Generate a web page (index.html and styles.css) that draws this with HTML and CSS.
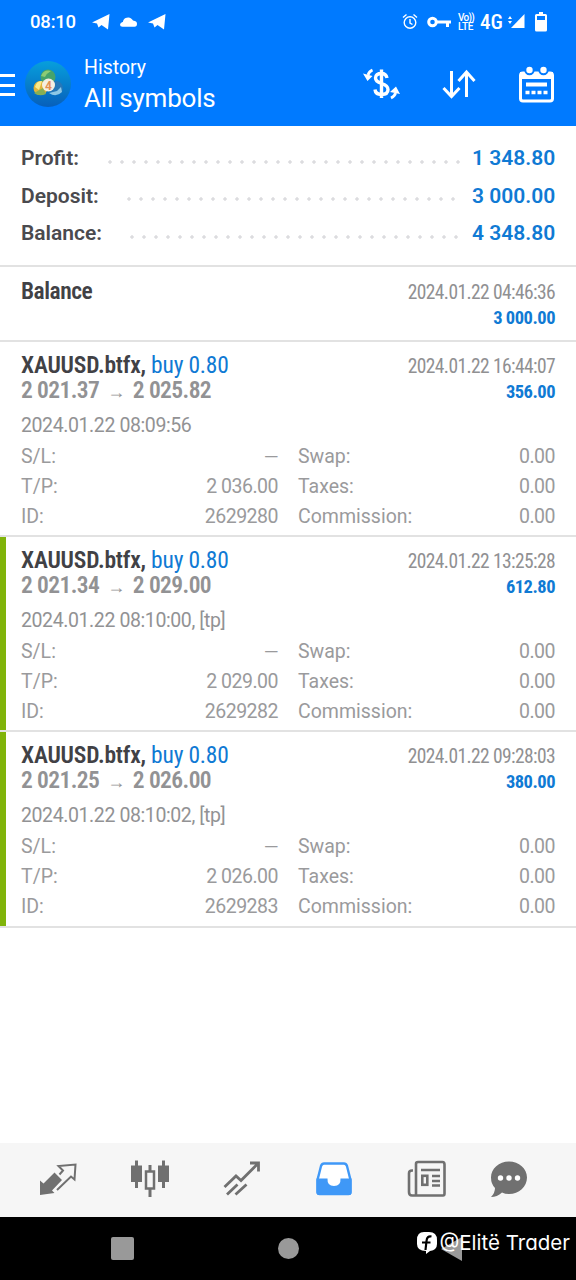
FILE: index.html
```
<!DOCTYPE html>
<html lang="en">
<head>
    <meta charset="UTF-8">
    <meta name="viewport" content="width=device-width, initial-scale=1.0">
    <title>History</title>
    <link rel="stylesheet" href="styles.css">
</head>
<body>
    <header>
        <div class="status">
            <span class="clock">08:10</span>
            <svg class="status-left" viewBox="0 0 80 24">
                <path d="M1 12.500L18.500 4L17 19.500L10.500 15L7.500 17.500L6 13.500Z"/>
                <path d="M32 13a4 4 0 0 1 .500-3a5.500 5.500 0 0 1 9.500 .500q4 .500 4 3.300q0 3-2.500 3H31.500q-2.500 0-2.500-2t3-3"/>
                <path d="M57 12.500L74.500 4L73 19.500L66.500 15L63.500 17.500L62 13.500Z"/>
            </svg>
            <div class="status-right">
                <svg class="alarm" viewBox="0 0 16 18">
                    <circle cx="8" cy="9.500" r="5.800"/>
                    <path d="M1 4.500L4.500 1.500M15 4.500L11.500 1.500M8 6V10L10.500 11.500"/>
                </svg>
                <svg class="key" viewBox="0 0 24 12">
                    <circle cx="5.500" cy="6" r="3.800"/>
                    <path d="M9 6H24M20.500 6V11"/>
                </svg>
                <span class="volte"><span>Vo))</span><span class="lte">LTE</span></span>
                <span class="net">4G</span>
                <svg class="signal" viewBox="0 0 17 17">
                    <path d="M16.500 1V15H3Z"/>
                    <path d="M0 6L2 3L4 6ZM0 8H4L2 11Z"/>
                </svg>
                <svg class="battery" viewBox="0 0 12 20">
                    <path d="M4 0H8V2H10.500Q12 2 12 3.500V18Q12 19.500 10.500 19.500H1.500Q0 19.500 0 18V3.500Q0 2 1.500 2H4ZM2 4V8H10V4Z" fill-rule="evenodd"/>
                </svg>
            </div>
        </div>
        <div class="toolbar">
            <div class="menu"></div>
            <svg class="logo" viewBox="0 0 46 48">
                <defs>
                    <linearGradient id="sea" x1="0" y1="0" x2="0" y2="1">
                        <stop offset="0" stop-color="#079fdc"/>
                        <stop offset="1" stop-color="#075fba"/>
                    </linearGradient>
                </defs>
                <circle cx="23" cy="24" r="23" fill="url(#sea)"/>
                <circle cx="23" cy="17" r="7.500" fill="#45a36b"/>
                <path d="M16 16Q19 9 26 11Q22 13 20 17Z" fill="#8ccb75"/>
                <circle cx="15.500" cy="28" r="7" fill="#e0b53b"/>
                <path d="M10 27Q12 20 17 21L14 30Z" fill="#fbea8a"/>
                <path d="M9 33Q14 37 21 34L18 28Z" fill="#86af55"/>
                <circle cx="31" cy="28" r="7" fill="#2577b8"/>
                <path d="M24 33Q31 38 37 32L36 27L32 31Z" fill="#8dc8e6"/>
                <circle cx="23.500" cy="25" r="6.500" fill="#f4eee2"/>
                <text x="23.500" y="29.500" class="logo-num">4</text>
            </svg>
            <div class="title">
                <div class="sub">History</div>
                <div class="main-title">All symbols</div>
            </div>
            <svg class="tools" viewBox="0 0 194 40">
                <!-- currency -->
                <path d="M24 14Q23 9.500 18.500 9.500Q12.500 9.500 12.500 14Q12.500 17.500 18.500 19.500Q25 21.500 25 25.500Q25 30.500 18.500 30.500Q12.500 30.500 12 25.500M18.500 5.500V34" stroke-width="3.400"/>
                <path d="M9.500 6Q6 7.500 5 11M28 34Q32 32 32.500 29" stroke-width="2.800"/>
                <path d="M0 9.500L9.500 12L4.500 17ZM37 30L27 28L33 22.500Z" fill="#fff" stroke="none"/>
                <!-- sort -->
                <path d="M88.500 7V31M80.500 24L88.500 32.500L96.500 24M103.500 33V8M95.500 17L103.500 8L111.500 17" stroke-width="3"/>
                <!-- calendar -->
                <rect x="157.500" y="9" width="32" height="28" rx="2.500" stroke-width="3"/>
                <path d="M157 8H190V15H157Z" fill="#fff" stroke="none"/>
                <circle cx="166.500" cy="6" r="4.200" fill="#fff" stroke="#007aff" stroke-width="2"/>
                <circle cx="180.500" cy="6" r="4.200" fill="#fff" stroke="#007aff" stroke-width="2"/>
                <path d="M163 20.500H184" stroke-width="4"/>
                <path d="M162.500 28.500H185" stroke-width="3.500" stroke-dasharray="4 2"/>
            </svg>
        </div>
    </header>

    <main>
        <section class="summary">
            <div class="sum-row"><b>Profit:</b><i class="dots profit"></i><strong>1 348.80</strong></div>
            <div class="sum-row"><b>Deposit:</b><i class="dots deposit"></i><strong>3 000.00</strong></div>
            <div class="sum-row"><b>Balance:</b><i class="dots total"></i><strong>4 348.80</strong></div>
        </section>

        <section class="balance">
            <div class="line"><b class="symbol">Balance</b><span class="time">2024.01.22 04:46:36</span></div>
            <div class="line second"><span></span><b class="amount">3 000.00</b></div>
        </section>

        <section class="trade">
            <div class="line"><span class="symbol"><b>XAUUSD.btfx,</b> <span class="buy">buy 0.80</span></span><span class="time">2024.01.22 16:44:07</span></div>
            <div class="line second"><b class="price">2 021.37 <span class="arrow">→</span> 2 025.82</b><b class="amount">356.00</b></div>
            <div class="open">2024.01.22 08:09:56</div>
            <div class="details">
                <span>S/L:</span><span class="dash">—</span><span>Swap:</span><span>0.00</span>
                <span>T/P:</span><span>2 036.00</span><span>Taxes:</span><span>0.00</span>
                <span>ID:</span><span>2629280</span><span>Commission:</span><span>0.00</span>
            </div>
        </section>

        <section class="trade tp">
            <div class="line"><span class="symbol"><b>XAUUSD.btfx,</b> <span class="buy">buy 0.80</span></span><span class="time">2024.01.22 13:25:28</span></div>
            <div class="line second"><b class="price">2 021.34 <span class="arrow">→</span> 2 029.00</b><b class="amount">612.80</b></div>
            <div class="open">2024.01.22 08:10:00, [tp]</div>
            <div class="details">
                <span>S/L:</span><span class="dash">—</span><span>Swap:</span><span>0.00</span>
                <span>T/P:</span><span>2 029.00</span><span>Taxes:</span><span>0.00</span>
                <span>ID:</span><span>2629282</span><span>Commission:</span><span>0.00</span>
            </div>
        </section>

        <section class="trade tp">
            <div class="line"><span class="symbol"><b>XAUUSD.btfx,</b> <span class="buy">buy 0.80</span></span><span class="time">2024.01.22 09:28:03</span></div>
            <div class="line second"><b class="price">2 021.25 <span class="arrow">→</span> 2 026.00</b><b class="amount">380.00</b></div>
            <div class="open">2024.01.22 08:10:02, [tp]</div>
            <div class="details">
                <span>S/L:</span><span class="dash">—</span><span>Swap:</span><span>0.00</span>
                <span>T/P:</span><span>2 026.00</span><span>Taxes:</span><span>0.00</span>
                <span>ID:</span><span>2629283</span><span>Commission:</span><span>0.00</span>
            </div>
        </section>
    </main>

    <nav class="tabs">
        <!-- quotes -->
        <svg viewBox="0 0 40 40">
            <path d="M2 21.500L5.500 24.500L16.500 13.500L24 21L14 31.500L16.500 34L2 36Z" fill="#707070"/>
            <path d="M21.500 15.500L25 11.500L20.500 7L37.500 5.500L36.500 20.500L33 17.500L19 31" fill="none" stroke="#707070" stroke-width="2"/>
        </svg>
        <!-- charts -->
        <svg viewBox="0 0 40 40">
            <path d="M1 6.500H12V23H1ZM28 6.500H39V23H28ZM5 1.500H8V29H5ZM32 1.500H35V29H32ZM18.500 6H21.500V12H18.500ZM18.500 30H21.500V38H18.500Z" fill="#707070"/>
            <rect x="16" y="12.500" width="8" height="17" fill="none" stroke="#707070" stroke-width="2.500"/>
        </svg>
        <!-- trade -->
        <svg viewBox="0 0 40 40">
            <path d="M1.500 28L13 17L18 21.500L34.500 5M27 4H35.500V12.500M4 35.500L14.500 25.500M12.500 35.500L23.500 25.500" fill="none" stroke="#707070" stroke-width="2.800"/>
        </svg>
        <!-- history -->
        <svg viewBox="0 0 40 40">
            <path d="M9 4.500H29Q31 4.500 32 7L35.500 21V33Q35.500 35 33.500 35H4.500Q2.500 35 2.500 33V21L6 7Q7 4.500 9 4.500Z" fill="#fff" stroke="#3f98f7" stroke-width="2.400"/>
            <path d="M1.500 19.500H12.500Q12 27 19 27Q26 27 25.500 19.500H36.500V33.500Q36.500 36 34 36H4Q1.500 36 1.500 33.500Z" fill="#3f98f7"/>
        </svg>
        <!-- news -->
        <svg viewBox="0 0 40 40">
            <path d="M6 11.500H5Q2 11.500 2 14.500V33Q2 36.500 5 36.500H36Q37.500 36.500 37.500 34.500V5.500Q37.500 3 35.500 3H11Q9 3 9 5V36" fill="none" stroke="#707070" stroke-width="2.600"/>
            <path d="M14 11H33M25 17H33M25 22H33M25 26.500H33" stroke="#707070" stroke-width="2.600"/>
            <rect x="15.300" y="16.800" width="5" height="9" fill="none" stroke="#707070" stroke-width="2.600"/>
        </svg>
        <!-- chat -->
        <svg viewBox="0 0 40 40">
            <path d="M20 2.500C30 2.500 38 9.500 38 18.500S30 35 20 35Q16 35 13 33.500Q8 38 2 38Q6 34 6 29Q2 25 2 18.500C2 9.500 10 2.500 20 2.500Z" fill="#707070"/>
            <g fill="#fff"><circle cx="11.500" cy="19" r="2.700"/><circle cx="20" cy="19" r="2.700"/><circle cx="28.500" cy="19" r="2.700"/></g>
        </svg>
    </nav>

    <footer>
        <div class="square"></div>
        <div class="circle"></div>
        <div class="back"></div>
        <div class="credit">
            <svg viewBox="0 0 22 24">
                <path d="M8 1H13Q21 1 21 9V13Q21 19 14 20L10 23V20Q1 20 1 13V9Q1 1 8 1Z" fill="#fff"/>
                <path d="M15.500 5.500Q11 4.500 10.500 10L9.500 19M6 11.500H14.500" fill="none" stroke="#000" stroke-width="2.200"/>
            </svg>
            <span>@Elitë Trader</span>
        </div>
    </footer>
</body>
</html>
```

FILE: styles.css
```
* {
    box-sizing: border-box;
}
body {
    margin: 0;
    height: 1280px;
    display: flex;
    flex-direction: column;
    overflow: hidden;
    background-color: #fff;
    font-family: Roboto, sans-serif;
    white-space: nowrap;
}
header {
    height: 126px;
    background-color: #007aff;
    color: #fff;
}
.status {
    display: flex;
    align-items: center;
    height: 43px;
    padding: 0 29px 0 30px;
}
.clock {
    width: 61px;
    font-size: 18.5px;
    font-weight: 500;
    letter-spacing: -0.2px;
}
.status-left {
    width: 80px;
    height: 24px;
    fill: #fff;
}
.status-right {
    display: flex;
    align-items: center;
    margin-left: auto;
}
.status-right svg {
    fill: #fff;
}
.status-right .alarm {
    width: 16px;
    height: 18px;
    margin-right: 9px;
    fill: none;
    stroke: #fff;
    stroke-width: 1.4;
}
.status-right .key {
    width: 24px;
    height: 12px;
    margin-right: 7px;
    fill: none;
    stroke: #fff;
    stroke-width: 3;
}
.volte {
    display: flex;
    flex-direction: column;
    width: 17px;
    margin-right: 5px;
    font-size: 10px;
    font-weight: 500;
    letter-spacing: -0.7px;
    line-height: 9px;
}
.lte {
    letter-spacing: -0.3px;
}
.net {
    width: 28px;
    font-size: 21px;
    font-weight: 500;
    font-stretch: 75%;
    font-family: "Roboto Condensed", Roboto, sans-serif;
}
.signal {
    width: 17px;
    height: 17px;
    margin-right: 10px;
}
.battery {
    width: 12px;
    height: 20px;
}
.toolbar {
    display: flex;
    align-items: center;
    height: 82px;
}
.menu {
    width: 15px;
    height: 22px;
    margin: 2px 10px 0 0;
    border-top: 3px solid #fff;
    border-bottom: 3px solid #fff;
    background: linear-gradient(#fff, #fff) 0 50% / 15px 3px no-repeat;
}
.logo {
    width: 46px;
    height: 48px;
}
.logo-num {
    font-size: 12px;
    font-weight: 700;
    text-anchor: middle;
    fill: #e39054;
}
.title {
    width: 292px;
    padding: 4px 0 0 13px;
}
.sub {
    font-size: 19.5px;
    line-height: 24px;
}
.main-title {
    font-size: 26px;
    letter-spacing: -0.2px;
    line-height: 36px;
}
.tools {
    flex: none;
    width: 194px;
    height: 40px;
    fill: none;
    stroke: #fff;
}
.summary {
    height: 141px;
    padding: 14px 21px 0;
    border-bottom: 2px solid #e2e2e2;
}
.sum-row {
    display: flex;
    align-items: center;
    height: 37.5px;
    font-size: 21px;
    line-height: 37px;
}
.sum-row b {
    color: #4a4a4e;
    font-weight: 600;
}
.sum-row strong {
    width: 83px;
    color: #107ad4;
    font-weight: 600;
    text-align: right;
}
.dots {
    height: 4px;
    margin: 6px 8px 0 auto;
    background: radial-gradient(circle, #dcdcdf 1.4px, transparent 2px) 0 0 / 12px 4px repeat-x;
}
.profit {
    width: 360px;
}
.deposit {
    width: 336px;
    margin-right: 13px;
}
.total {
    width: 336px;
    margin-right: 10px;
}
.balance,
.trade {
    padding: 11px 21px 0;
    border-bottom: 2px solid #e2e2e2;
    font-stretch: 75%;
}
.balance {
    height: 75px;
}
.balance .symbol {
    letter-spacing: -0.5px;
}
.trade {
    height: 195.2px;
    padding-top: 10px;
}
.tp {
    background: linear-gradient(#80b40a, #80b40a) 0 0 / 6px 100% no-repeat;
}
.line {
    display: flex;
    justify-content: space-between;
    height: 26px;
    line-height: 26px;
    font-family: "Roboto Condensed", Roboto, sans-serif;
}
.symbol {
    color: #414145;
    font-size: 23.5px;
    font-weight: 600;
    letter-spacing: -0.2px;
}
.symbol b {
    font-weight: 600;
}
.buy {
    color: #107ad4;
    font-weight: 400;
}
.time {
    padding-top: 2px;
    color: #909092;
    font-size: 19.5px;
    letter-spacing: -0.6px;
}
.price {
    color: #929294;
    font-size: 23.5px;
    font-weight: 600;
    letter-spacing: -0.6px;
    line-height: 25px;
}
.arrow {
    display: inline-block;
    width: 24px;
    text-align: center;
    font-size: 18px;
    font-weight: 400;
    line-height: 20px;
    font-family: "Liberation Sans", sans-serif;
}
.amount {
    padding-top: 1px;
    color: #107ad4;
    font-size: 18.5px;
    letter-spacing: -0.5px;
}
.open {
    height: 38px;
    padding-top: 8px;
    color: #929294;
    font-size: 19.5px;
    font-stretch: 100%;
    letter-spacing: -0.4px;
    line-height: 28px;
}
.details {
    display: grid;
    grid-template-columns: 80px 177px 134px 143px;
    grid-auto-rows: 30px;
    color: #9a9a9c;
    font-size: 19.5px;
    font-stretch: 100%;
    line-height: 30px;
}
.details span:nth-child(even) {
    text-align: right;
    letter-spacing: -0.5px;
}
.details span:nth-child(4n + 3) {
    padding-left: 20px;
}
.details .dash {
    font-size: 19px;
}
.tabs {
    display: flex;
    gap: 52.3px;
    height: 74px;
    margin-top: auto;
    padding: 16px 0 0 38px;
    background-color: #f6f6f6;
}
.tabs svg {
    width: 40px;
    height: 40px;
}
.tabs svg:last-child {
    margin-left: -10px;
}
footer {
    position: relative;
    display: flex;
    align-items: center;
    height: 63px;
    padding-left: 111px;
    background-color: #000;
}
.square {
    width: 23px;
    height: 23px;
    border-radius: 2px;
    background-color: #999;
}
.circle {
    width: 21px;
    height: 21px;
    margin-left: 144px;
    border-radius: 50%;
    background-color: #999;
}
.back {
    margin-left: 142px;
    border: solid transparent;
    border-width: 12px 21px 12px 0;
    border-right-color: #999;
}
/* the signature lies over the back button */
.credit {
    position: absolute;
    top: 10px;
    right: 6px;
    display: flex;
    align-items: center;
    color: #fff;
    font-family: Inter, sans-serif;
    font-feature-settings: "cv11";
    font-size: 20.5px;
    line-height: 32px;
}
.credit svg {
    width: 22px;
    height: 24px;
    margin-right: 2px;
}
```
